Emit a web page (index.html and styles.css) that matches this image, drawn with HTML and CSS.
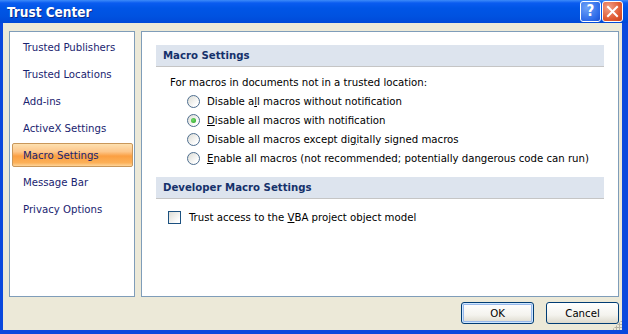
FILE: index.html
```html
<!DOCTYPE html>
<html lang="en">
<head>
    <meta charset="UTF-8">
    <title>Trust Center</title>
    <link rel="stylesheet" href="styles.css">
</head>
<body>
    <div class="window">
        <div class="titlebar">
            <span class="title">Trust Center</span>
            <div class="caption-buttons">
                <span class="cap-btn help">?</span>
                <span class="cap-btn close">
                    <svg width="13" height="13" viewBox="0 0 13 13">
                        <path d="M2 2 L11 11 M11 2 L2 11" stroke="#fff" stroke-width="2" stroke-linecap="square"/>
                    </svg>
                </span>
            </div>
        </div>
        <div class="client">
            <div class="panes">
                <ul class="nav">
                    <li>Trusted Publishers</li>
                    <li>Trusted Locations</li>
                    <li>Add-ins</li>
                    <li>ActiveX Settings</li>
                    <li class="selected">Macro Settings</li>
                    <li>Message Bar</li>
                    <li>Privacy Options</li>
                </ul>
                <div class="content">
                    <div class="section-head">Macro Settings</div>
                    <div class="intro">For macros in documents not in a trusted location:</div>
                    <div class="option"><span class="radio"></span><span>Disable a<u>l</u>l macros without notification</span></div>
                    <div class="option"><span class="radio checked"></span><span><u>D</u>isable all macros with notification</span></div>
                    <div class="option"><span class="radio"></span><span>Disable all macros except di<u>g</u>itally signed macros</span></div>
                    <div class="option"><span class="radio"></span><span><u>E</u>nable all macros (not recommended; potentially dangerous code can run)</span></div>
                    <div class="section-head second">Developer Macro Settings</div>
                    <div class="check-row"><span class="checkbox"></span><span>Trust access to the <u>V</u>BA project object model</span></div>
                </div>
            </div>
            <div class="buttons">
                <button class="btn default">OK</button>
                <button class="btn">Cancel</button>
            </div>
            <span class="grip"></span>
        </div>
    </div>
</body>
</html>
```

FILE: styles.css
```css
body {
    margin: 0;
    font-family: "DejaVu Sans Condensed", "DejaVu Sans", sans-serif;
    font-stretch: condensed;
    font-size: 11.3px;
}
.window {
    width: 628px;
    height: 334px;
    display: flex;
    flex-direction: column;
    background: #0a48dd;
}
.titlebar {
    height: 23px;
    flex: none;
    display: flex;
    align-items: center;
    justify-content: space-between;
    background: linear-gradient(#3d8bf9 0, #0a5cf0 3px, #0055e6 8px, #0052e0 16px, #0049d8 23px);
}
.title {
    margin-left: 7px;
    color: #fff;
    font-weight: bold;
    font-size: 13.5px;
    text-shadow: 1px 1px #0b2a8a;
}
.caption-buttons {
    display: flex;
    gap: 1px;
    margin-right: 5px;
    margin-top: -1px;
}
.cap-btn {
    width: 19px;
    height: 19px;
    border: 1px solid #fff;
    border-radius: 3px;
    display: flex;
    align-items: center;
    justify-content: center;
    color: #fff;
    font-family: "DejaVu Sans", sans-serif;
    font-weight: bold;
    font-size: 15px;
}
.help {
    background: radial-gradient(circle at 30% 30%, #6ea2f8, #2d6ae8 70%, #1b50d0);
}
.close {
    background: radial-gradient(circle at 30% 30%, #f0a08a, #e05b34 60%, #c8401c);
}
.client {
    flex: 1;
    margin: 0 6px 4px 3px;
    background: #ece9d8;
    display: flex;
    flex-direction: column;
    padding: 8px 3px 0 6px;
    position: relative;
}
.panes {
    display: flex;
    gap: 6px;
    height: 266px;
}
.nav {
    list-style: none;
    margin: 0;
    padding: 3px 1px 0 2px;
    background: #fff;
    border: 1px solid #7f9db9;
    box-sizing: border-box;
    width: 126px;
    display: flex;
    flex-direction: column;
    gap: 3px;
}
.nav li {
    height: 24px;
    line-height: 24px;
    padding-left: 10px;
    color: #1a2470;
    border: 1px solid transparent;
    box-sizing: border-box;
}
.nav li.selected {
    background: linear-gradient(#fde0b0 0%, #fdc68a 35%, #fb9f42 55%, #fcb058 85%, #fdd49a 100%);
    border-color: #c9975a;
    border-radius: 2px;
}
.content {
    flex: 1;
    background: #fff;
    border: 1px solid #7f9db9;
    padding: 13px 14px 0 14px;
}
.section-head {
    height: 21px;
    line-height: 21px;
    background: #dde4ee;
    border-bottom: 1px solid #c5c5c5;
    padding-left: 7px;
    font-weight: bold;
    color: #15316b;
}
.section-head.second {
    margin-top: 9px;
}
.intro {
    margin-top: 7px;
    height: 18px;
    line-height: 18px;
    padding-left: 14px;
}
.option {
    height: 19px;
    display: flex;
    align-items: center;
    padding-left: 31px;
}
.radio {
    width: 11px;
    height: 11px;
    border: 1px solid #4e6e8f;
    border-radius: 50%;
    background: linear-gradient(135deg, #dcdcd5, #fff 80%);
    margin-right: 7px;
    position: relative;
}
.radio.checked::after {
    content: "";
    position: absolute;
    left: 3px;
    top: 3px;
    width: 5px;
    height: 5px;
    border-radius: 50%;
    background: radial-gradient(circle at 40% 40%, #74d96c, #21a121);
}
.check-row {
    margin-top: 9px;
    height: 19px;
    display: flex;
    align-items: center;
    padding-left: 12px;
}
.checkbox {
    width: 11px;
    height: 11px;
    border: 1px solid #1c5180;
    background: linear-gradient(135deg, #dcdcd5, #fff 85%);
    margin-right: 8px;
}
.buttons {
    display: flex;
    justify-content: flex-end;
    gap: 12px;
    margin-top: 5px;
}
.btn {
    width: 73px;
    height: 22px;
    font-family: inherit;
    font-size: 11.3px;
    font-stretch: condensed;
    color: #000;
    border: 1px solid #003c74;
    border-radius: 3px;
    background: linear-gradient(#fff, #f4f3ee 60%, #dcd9cc);
    padding: 0;
}
.btn.default {
    box-shadow: inset 0 0 0 1px #cee7ff, inset 0 0 0 2px #98b8ea;
}
.grip {
    position: absolute;
    right: 0;
    bottom: 0;
    width: 10px;
    height: 10px;
    background: radial-gradient(circle, #b5b2a4 1px, transparent 1.2px) 0 0 / 3px 3px;
    clip-path: polygon(100% 0, 100% 100%, 0 100%);
}
u {
    text-decoration: underline;
    text-underline-offset: 1px;
}
```
